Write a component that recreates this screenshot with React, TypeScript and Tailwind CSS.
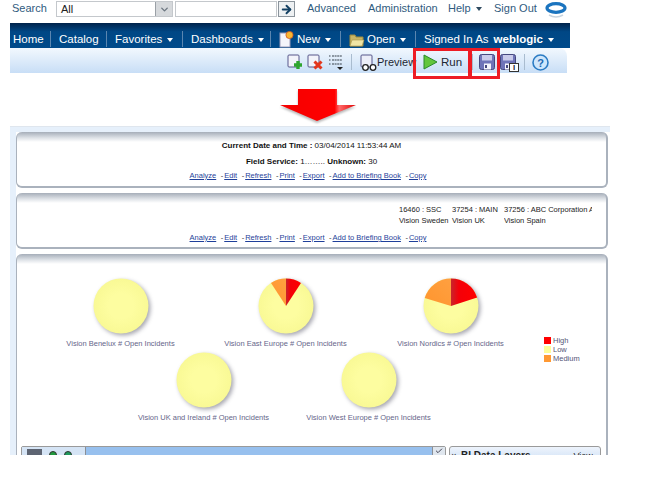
import React from 'react';
import { ArrowRight, ChevronDown, Check } from 'lucide-react';

const Caret = ({ className = 'border-t-white' }: { className?: string }) => (
  <span className={`inline-block w-0 h-0 border-x-[3.5px] border-x-transparent border-t-[4px] ${className}`} />
);

const pt = (r: number, deg: number) => {
  const a = (deg * Math.PI) / 180;
  return `${(30 + r * Math.sin(a)).toFixed(2)} ${(30 - r * Math.cos(a)).toFixed(2)}`;
};

// angles are clockwise from 12 o'clock; red runs from 0 to `red`, orange from `-orange` to 0
const Pie = ({ id, red = 0, orange = 0 }: { id: string; red?: number; orange?: number }) => (
  <svg width="60" height="60" viewBox="0 0 60 60" className="drop-shadow-[2px_2px_2px_rgba(60,60,80,0.45)]">
    <defs>
      <radialGradient id={`${id}y`}>
        <stop offset="0.45" stopColor="#fdfda0" />
        <stop offset="1" stopColor="#f9f995" />
      </radialGradient>
      <linearGradient id={`${id}r`} x1="0" x2="1" y1="0" y2="0">
        <stop offset="0" stopColor="#c8242c" />
        <stop offset="0.3" stopColor="#f40008" />
        <stop offset="1" stopColor="#ff0000" />
      </linearGradient>
      <linearGradient id={`${id}o`} x1="0" x2="1" y1="1" y2="0">
        <stop offset="0" stopColor="#ff952e" />
        <stop offset="1" stopColor="#ffa040" />
      </linearGradient>
    </defs>
    <circle cx="30" cy="30" r="27.5" fill={`url(#${id}y)`} />
    {red > 0 && <path d={`M30 30 L${pt(27.5, 0)} A27.5 27.5 0 0 1 ${pt(27.5, red)} Z`} fill={`url(#${id}r)`} />}
    {orange > 0 && <path d={`M30 30 L${pt(27.5, -orange)} A27.5 27.5 0 0 1 ${pt(27.5, 0)} Z`} fill={`url(#${id}o)`} />}
  </svg>
);

const PieCell = ({ label, ...pie }: { label: string; id: string; red?: number; orange?: number }) => (
  <div className="w-[165px] flex flex-col items-center">
    <Pie {...pie} />
    <div className="mt-[2px] text-[7.5px] leading-[11px] text-[#66668a] whitespace-nowrap">{label}</div>
  </div>
);

const ReportLinks = () => (
  <div className="flex justify-center pr-[7px] text-[7.5px] leading-[11px] text-[#1f3f9a]">
    {['Analyze', 'Edit', 'Refresh', 'Print', 'Export', 'Add to Briefing Book', 'Copy'].map((l, i) => (
      <span key={l} className="whitespace-nowrap">
        {i > 0 && <span className="text-[#333] ml-[4.5px] mr-[1px]">-</span>}
        <span className="underline">{l}</span>
      </span>
    ))}
  </div>
);

const NavSeg = ({ w, pl, children, last }: { w: string; pl: string; children: React.ReactNode; last?: boolean }) => (
  <div className={`flex items-center gap-[5px] whitespace-nowrap h-[16px] pt-[2px] ${w} ${pl} ${last ? '' : 'border-r border-[#5b86b0]'}`}>{children}</div>
);

const DocIcon = ({ children }: { children?: React.ReactNode }) => (
  <svg width="17" height="17" viewBox="0 0 17 17" className="shrink-0">
    <rect x="1" y="1" width="11" height="12" rx="1" fill="#f2f3fa" stroke="#56568a" />
    {children}
  </svg>
);

const Divider = () => <span className="block w-px h-[16px] bg-[#a9bccf] shrink-0" />;

const Floppy = () => (
  <svg width="16" height="16" viewBox="0 0 16 16" className="shrink-0 block">
    <rect x="0.5" y="0.5" width="15" height="15" rx="2" fill="#6f74b8" stroke="#45487f" />
    <rect x="3" y="1" width="10" height="5.5" fill="#c9cbea" />
    <rect x="5" y="9.5" width="7" height="6" fill="#f4f4fb" />
    <rect x="6" y="11" width="2" height="3" fill="#45487f" />
  </svg>
);

export default function App() {
  return (
    <div className="relative w-[651px] h-[486px] bg-white overflow-hidden font-['Liberation_Sans',Arial,sans-serif]">
      {/* global header */}
      <div className="h-[23px] flex items-start text-[11px] text-[#2f5b7e]">
        <span className="ml-[12px] mt-[1px] w-[44px] leading-[15px]">Search</span>
        <div className="mt-[1px] w-[117px] h-[16px] border border-[#c4c8cc] flex justify-between">
          <span className="pl-[4px] leading-[14px] text-[#222]">All</span>
          <span className="w-[17px] bg-[#d6d9dc] border-l border-[#9aa0a6] flex items-center justify-center">
            <ChevronDown size={11} strokeWidth={3} className="text-[#6b7680]" />
          </span>
        </div>
        <div className="mt-[1px] ml-[2px] w-[102px] h-[16px] border border-[#c4c8cc]" />
        <span className="mt-[1px] ml-[1px] w-[17px] h-[16px] border border-[#8b949c] bg-[#eef1f3] flex items-center justify-center">
          <ArrowRight size={13} strokeWidth={3.5} className="text-[#123f62]" />
        </span>
        <span className="ml-[12px] mt-[1px] w-[61px] leading-[15px]">Advanced</span>
        <span className="mt-[1px] w-[80px] leading-[15px]">Administration</span>
        <span className="mt-[1px] w-[46px] leading-[15px] flex items-center gap-[5px]">Help <Caret className="border-t-[#2f4a60]" /></span>
        <span className="mt-[1px] w-[51px] leading-[15px]">Sign Out</span>
        <svg width="22" height="20" viewBox="0 0 22 20" className="mt-[1px]">
          <ellipse cx="11" cy="7" rx="9" ry="4.3" fill="none" stroke="#1b74bf" strokeWidth="3.2" />
          <path d="M4 14 Q11 18 18 14" fill="none" stroke="#c8d4df" strokeWidth="1.6" />
        </svg>
      </div>

      {/* nav bar */}
      <div className="ml-[10px] w-[560px] h-[25px] pt-[8px] flex items-start text-[11.5px] text-white bg-[linear-gradient(#00224a,#004785_35%,#004a8a)]">
        <NavSeg w="w-[41px]" pl="pl-[3px]">Home</NavSeg>
        <NavSeg w="w-[56px]" pl="pl-[8px]">Catalog</NavSeg>
        <NavSeg w="w-[76px]" pl="pl-[8px]">Favorites <Caret /></NavSeg>
        <NavSeg w="w-[88px]" pl="pl-[8px]">Dashboards <Caret /></NavSeg>
        <NavSeg w="w-[70px]" pl="pl-[8px]">
          <svg width="15" height="18" viewBox="0 0 15 18" className="-mr-[2px] -mt-[3px]">
            <rect x="1" y="3" width="10" height="14" fill="#f4f4fa" stroke="#9a9ab8" />
            <circle cx="10.5" cy="5" r="3.6" fill="#f7b733" stroke="#d2541e" strokeWidth="0.8" />
          </svg>
          New <Caret />
        </NavSeg>
        <NavSeg w="w-[75px]" pl="pl-[8px]">
          <svg width="16" height="14" viewBox="0 0 16 14" className="-mr-[3px]">
            <path d="M1 2h5l1 2h7v9H1z" fill="#c9b565" stroke="#9d8a3d" />
            <path d="M1 13l2-6h12l-2 6z" fill="#efe4a4" stroke="#a8954a" strokeWidth="0.6" />
          </svg>
          Open <Caret />
        </NavSeg>
        <NavSeg w="flex-1" pl="pl-[8px]" last>
          Signed In As <b className="font-bold">weblogic</b> <Caret />
        </NavSeg>
      </div>

      {/* toolbar */}
      <div className="ml-[10px] w-[557px] h-[25px] rounded-tr-[8px] pt-[6px] flex items-start pl-[277px] text-[11px] leading-[17px] text-[#1d2733] bg-[linear-gradient(#f2f8fe,#c8def6)]">
        <DocIcon>
          <path d="M11 7v8M7 11h8" stroke="#2fa52f" strokeWidth="3.4" />
        </DocIcon>
        <span className="ml-[3px]">
          <DocIcon>
            <path d="M7.5 7.5l7 7M14.5 7.5l-7 7" stroke="#e3361c" strokeWidth="3" />
          </DocIcon>
        </span>
        <svg width="16" height="16" viewBox="0 0 16 16" className="ml-[4px] shrink-0">
          <path d="M4 2h10M4 6h10M4 10h10M1 2h1.5M1 6h1.5M1 10h1.5" stroke="#37404a" strokeWidth="1.2" strokeDasharray="2 0.6" />
          <path d="M9 13h6l-3 3z" fill="#222" />
        </svg>
        <span className="ml-[7px]"><Divider /></span>
        <svg width="17" height="18" viewBox="0 0 17 18" className="ml-[8px] shrink-0">
          <rect x="1" y="1" width="11" height="12" rx="1" fill="#eceef8" stroke="#56568a" />
          <circle cx="5.5" cy="13.5" r="2.8" fill="#fff" stroke="#222" strokeWidth="1.3" />
          <circle cx="13" cy="13.5" r="2.8" fill="#fff" stroke="#222" strokeWidth="1.3" />
        </svg>
        <span className="w-[39px]">Preview</span>
        <svg width="15" height="16" viewBox="0 0 15 16" className="ml-[7px] shrink-0">
          <path d="M1 1l13 7-13 7z" fill="#63c63c" stroke="#2b8a2b" />
        </svg>
        <span className="ml-[3px] w-[31px] text-[11.5px]">Run</span>
        <Divider />
        <span className="ml-[6px]"><Floppy /></span>
        <span className="ml-[5px] relative">
          <Floppy />
          <span className="absolute right-[-3px] bottom-[-2px] w-[10px] h-[9px] bg-white border border-[#333] text-[8px] leading-[7px] text-center font-bold">I</span>
        </span>
        <span className="ml-[8px]"><Divider /></span>
        <svg width="17" height="17" viewBox="0 0 17 17" className="ml-[7px] shrink-0">
          <circle cx="8.5" cy="8.5" r="7.5" fill="#cfe6fb" stroke="#2c7cc4" strokeWidth="1.6" />
          <text x="8.5" y="12.5" textAnchor="middle" fontSize="11" fontWeight="700" fill="#1c69b3" fontFamily="Liberation Sans">?</text>
        </svg>
      </div>

      {/* red arrow */}
      <div className="mt-[16px] ml-[280px] h-[37px]">
        <svg width="77" height="36" viewBox="0 0 77 36" className="drop-shadow-[0_2px_1px_rgba(80,80,80,0.4)]">
          <defs>
            <linearGradient id="arrowFill" x1="0" x2="1" y1="0" y2="0">
              <stop offset="0" stopColor="#f50000" />
              <stop offset="0.72" stopColor="#ff0000" />
              <stop offset="0.78" stopColor="#ff6a6a" />
              <stop offset="1" stopColor="#e00000" />
            </linearGradient>
          </defs>
          <path d="M18 0H57V16H76L37 32 0 16H18Z" fill="url(#arrowFill)" />
        </svg>
      </div>

      {/* dashboard page */}
      <div className="ml-[10px] w-[600px] h-[329px] bg-[#e6f0fb] pl-[6px] pt-[5px] border-t border-[#dfe6ee] overflow-hidden">
        <div className="bg-white h-full pr-[2px]">
          <Card h="h-[56px]">
            <div className="pt-[6px] text-center text-[8px] leading-[16px] text-[#111]">
              <div className="h-[16px]"><b>Current Date and Time :</b> 03/04/2014 11:53:44 AM</div>
              <div className="h-[16px]"><b>Field Service:</b> 1…….. <b>Unknown:</b> 30</div>
            </div>
            <ReportLinks />
          </Card>
          <div className="h-[5px] bg-white" />
          <Card h="h-[56px]">
            <div className="pt-[11px] h-[39px] pl-[382px] flex text-[7.5px] leading-[11px] text-[#222] whitespace-nowrap">
              <div className="w-[53px]"><div>16460 : SSC</div><div>Vision Sweden</div></div>
              <div className="w-[52px]"><div>37254 : MAIN</div><div>Vision UK</div></div>
              <div className="w-[88px] overflow-hidden"><div>37256 : ABC Corporation A</div><div>Vision Spain</div></div>
            </div>
            <ReportLinks />
          </Card>
          <div className="h-[5px] bg-white" />
          <Card h="h-[210px]">
            <div className="pt-[22px] pl-[21px] flex items-end">
              <PieCell id="a" label="Vision Benelux # Open Incidents" />
              <PieCell id="b" label="Vision East Europe # Open Incidents" red={33} orange={33} />
              <PieCell id="c" label="Vision Nordics # Open Incidents" red={72} orange={73} />
              <div className="ml-[11px] -mb-[14px] text-[7.5px] leading-[9px] text-[#555577]">
                {[['High', 'bg-[#ff0000]'], ['Low', 'bg-[#fdfd9a]'], ['Medium', 'bg-[#ff9933]']].map(([t, c]) => (
                  <div key={t} className="flex items-center gap-[2px] h-[9px]">
                    <span className={`w-[7px] h-[7px] ${c}`} />{t}
                  </div>
                ))}
              </div>
            </div>
            <div className="pt-[1px] pl-[104px] flex">
              <PieCell id="d" label="Vision UK and Ireland # Open Incidents" />
              <PieCell id="e" label="Vision West Europe # Open Incidents" />
            </div>
            <div className="mt-[23px] ml-[4px] flex h-[9px]">
              <div className="w-[425px] h-[16px] border border-[#9a9a9a] rounded-t-[2px] bg-[#97c0ee] flex">
                <div className="w-[64px] bg-[#d5e4f5] border-r border-[#8a8f96] flex items-start pl-[5px] pt-[2px] gap-[7px]">
                  <span className="w-[15px] h-[8px] bg-[#5d6472]" />
                  <span className="w-[8px] h-[8px] mt-[2px] rounded-full bg-[#1f9a3c] border border-[#333]" />
                  <span className="w-[8px] h-[8px] mt-[2px] rounded-full bg-[#1f9a5c] border border-[#333]" />
                </div>
                <div className="flex-1" />
                <div className="w-[13px] bg-[#dfe6ee] border-l border-[#8a8f96] flex justify-center">
                  <Check size={8} strokeWidth={3} className="text-[#445]" />
                </div>
              </div>
              <div className="ml-[3px] w-[152px] h-[16px] border border-[#9a9a9a] rounded-t-[3px] pt-[3px] bg-[linear-gradient(#eef4fc,#cfe0f6)] flex whitespace-nowrap text-[10px] leading-[12px] text-[#222]">
                <span className="w-[8px] text-center text-[9px]">×</span>
                <b className="ml-[3px]">BI Data Layers</b>
                <span className="ml-[43px] text-[9px]">View</span>
              </div>
            </div>
          </Card>
        </div>
      </div>

      {/* red highlight boxes drawn over the toolbar */}
      <div className="absolute left-[413px] top-[48px] w-[58px] h-[31px] border-[3px] border-[#ed1c24]" />
      <div className="absolute left-[469px] top-[48px] w-[31px] h-[31px] border-[3px] border-[#ed1c24]" />
    </div>
  );
}

function Card({ h, children }: { h: string; children: React.ReactNode }) {
  return (
    <div className={`${h} rounded-[6px] overflow-hidden border-r-2 border-b-2 border-l border-[#aab2bd] bg-[linear-gradient(#a6aeb9,#dfe3e8_6px,#ffffff_10px)]`}>
      {children}
    </div>
  );
}
